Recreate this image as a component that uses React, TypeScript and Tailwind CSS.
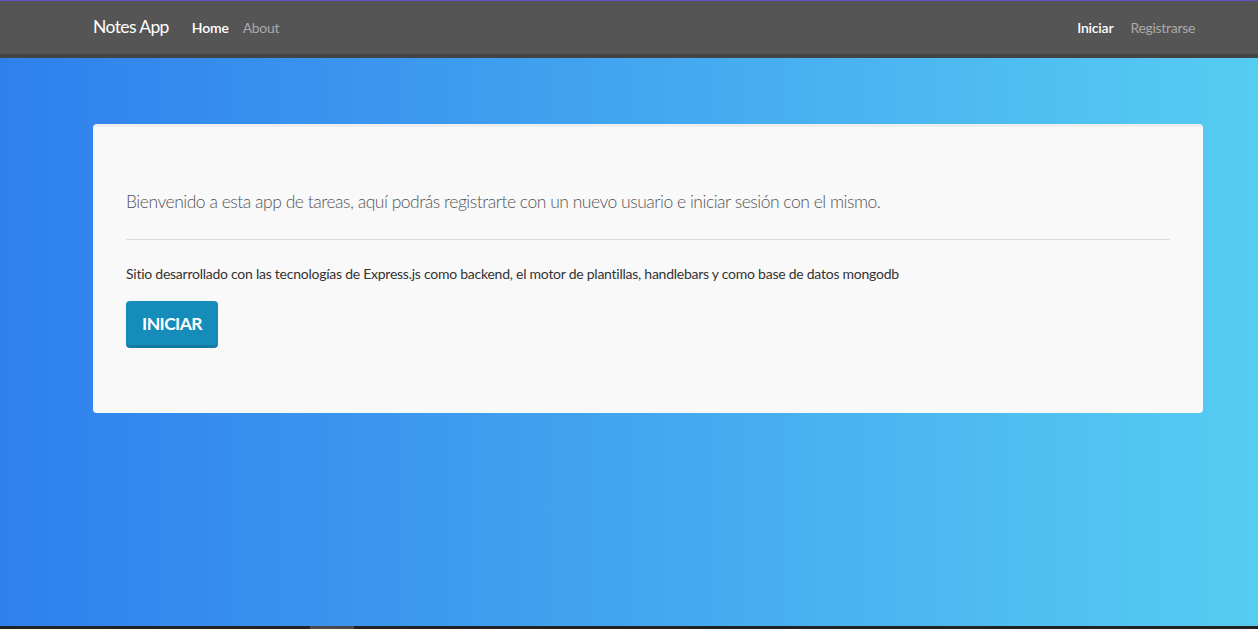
import React from "react";

export default function App() {
  return (
    <div
      className="w-full h-[629px] flex flex-col overflow-hidden"
      style={{ fontFamily: "Lato, 'Open Sans', sans-serif" }}
    >
      <nav className="h-[58px] shrink-0 bg-[#555555] border-t border-t-[#6a4fc4] border-b-4 border-b-[#444444] flex items-center pl-[93px] pr-[63px]">
        <span className="text-white text-[17.5px] mr-[23px] tracking-[-0.6px]">Notes App</span>
        <span className="text-white text-[14px] font-semibold mr-[14px] tracking-[-0.2px]">Home</span>
        <span className="text-[#aaaaaa] text-[14px] tracking-[-0.3px]">About</span>
        <div className="ml-auto flex items-center">
          <span className="text-white text-[14px] font-semibold mr-[17px] tracking-[-0.2px]">Iniciar</span>
          <span className="text-[#aaaaaa] text-[14px] tracking-[-0.3px]">Registrarse</span>
        </div>
      </nav>
      <main className="flex-1 bg-[linear-gradient(to_right,#2f80ed,#56ccf2)] pt-[66px] pl-[93px] pr-[55px]">
        <div className="bg-[#f9f9fa] rounded-[4px] border-t-[3px] border-t-[#eeeeee] px-[33px] pt-[62px] h-[289px]">
          <p className="text-[17.5px] text-[#555555] font-light leading-[26px] tracking-[-0.48px]">
            Bienvenido a esta app de tareas, aquí podrás registrarte con un nuevo usuario e iniciar sesión con el mismo.
          </p>
          <hr className="border-0 border-t border-[#dddddd] mt-[24px] mb-[24px]" />
          <p className="text-[14px] text-[#333333] leading-[20px] tracking-[-0.25px]">
            Sitio desarrollado con las tecnologías de Express.js como backend, el motor de plantillas, handlebars y como base de datos mongodb
          </p>
          <button className="mt-[17px] w-[92px] h-[47px] bg-[#158cba] border-b-[3px] border-b-[#127ba3] rounded-[4px] text-white font-bold text-[17.5px] uppercase tracking-[-0.6px] leading-none pt-[1px]">
            Iniciar
          </button>
        </div>
      </main>
      <div className="h-[3px] shrink-0 bg-[#222222] flex">
        <div className="ml-[310px] w-[44px] bg-[#4a4a4a]" />
      </div>
    </div>
  );
}
